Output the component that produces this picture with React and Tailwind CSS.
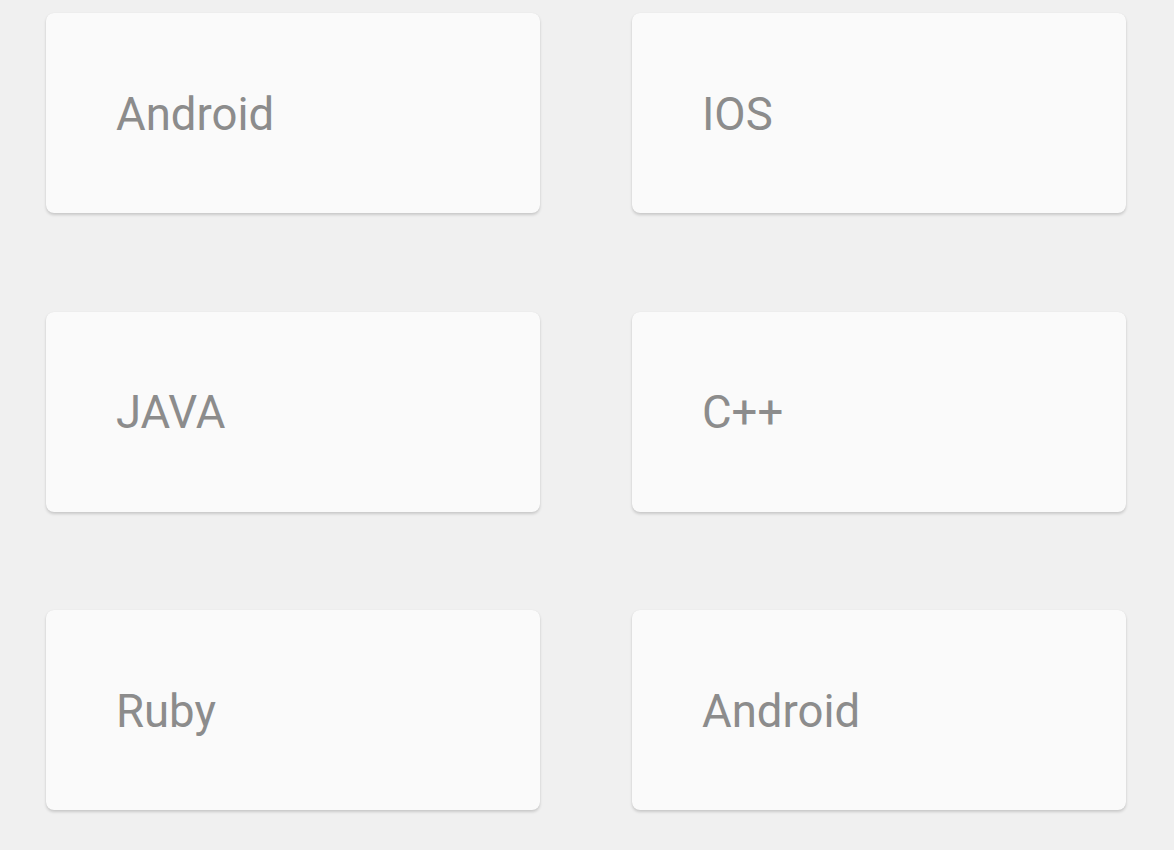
const ITEMS = ['Android', 'IOS', 'JAVA', 'C++', 'Ruby', 'Android']

export default function App() {
  return (
    <div
      className="w-[1174px] h-[850px] overflow-hidden bg-[#f0f0f0] pl-[46px] pr-[48px] pt-[13px]"
      style={{ fontFamily: 'Roboto, "Liberation Sans", sans-serif' }}
    >
      <div className="grid grid-cols-2 gap-x-[92px] gap-y-[98.5px]">
        {ITEMS.map((label, i) => (
          <div
            key={i}
            className="h-[200px] flex items-center pl-[70px] pt-[3px] rounded-[8px] bg-[#fafafa] shadow-[0_2px_3px_rgba(0,0,0,0.16),0_0_1px_rgba(0,0,0,0.08)]"
          >
            <span className="text-[45.5px] leading-none text-[#8c8c8c]">{label}</span>
          </div>
        ))}
      </div>
    </div>
  )
}
